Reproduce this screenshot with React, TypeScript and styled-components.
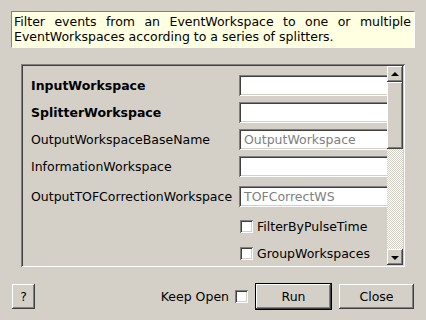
import React from "react";
import styled, { createGlobalStyle, css } from "styled-components";

const Global = createGlobalStyle`
  html, body { margin: 0; padding: 0; background: #d4d0c8; }
  body { font-family: "DejaVu Sans", sans-serif; font-size: 12.5px; color: #000; }
  * { box-sizing: border-box; }
`;

const raised = css`
  box-shadow: inset -1px -1px #404040, inset 1px 1px #ffffff,
    inset -2px -2px #808080, inset 2px 2px #d4d0c8;
`;
const sunken = css`
  box-shadow: inset 1px 1px #808080, inset -1px -1px #ffffff,
    inset 2px 2px #404040, inset -2px -2px #d4d0c8;
`;

const Dialog = styled.div`
  width: 426px;
  height: 320px;
  padding: 11px 11px 0 11px;
  display: flex;
  flex-direction: column;
  background: #d4d0c8;
`;

const Description = styled.div`
  height: 37px;
  border: 1px solid;
  border-color: #808080 #ffffff #ffffff #808080;
  background: #ffffe1;
  padding: 3px 3px 3px 2px;
  line-height: 14.5px;
  text-align: justify;
`;

const ScrollFrame = styled.div`
  margin: 16px 10px 0 10px;
  height: 203px;
  padding: 2px;
  display: flex;
  ${sunken};
`;

const Viewport = styled.div`
  flex: 1;
  overflow: hidden;
  padding: 9px 0 0 8px;
  display: flex;
  flex-direction: column;
`;

const Row = styled.div<{ $gap: number }>`
  display: grid;
  grid-template-columns: 208px 160px;
  align-items: center;
  height: 21px;
  margin-top: ${(p) => p.$gap}px;
`;

const Label = styled.span<{ $bold?: boolean }>`
  font-weight: ${(p) => (p.$bold ? "bold" : "normal")};
  white-space: nowrap;
`;

const Input = styled.div`
  height: 21px;
  background: #fff;
  padding: 0 5px;
  display: flex;
  align-items: center;
  color: #808080;
  white-space: nowrap;
  ${sunken};
`;

const CheckCell = styled.div`
  grid-column: 2;
  display: flex;
  align-items: center;
  gap: 4px;
  padding-left: 1px;
`;

const Box = styled.span`
  width: 13px;
  height: 13px;
  background: #fff;
  flex: none;
  ${sunken};
`;

const ScrollBar = styled.div`
  width: 16px;
  display: flex;
  flex-direction: column;
`;

const ScrollBtn = styled.div`
  height: 16px;
  background: #d4d0c8;
  display: flex;
  align-items: center;
  justify-content: center;
  ${raised};
`;

const Arrow = styled.span<{ $up?: boolean }>`
  width: 0;
  height: 0;
  border-left: 4px solid transparent;
  border-right: 4px solid transparent;
  ${(p) =>
    p.$up
      ? "border-bottom: 4px solid #000; margin-top: -1px;"
      : "border-top: 4px solid #000; margin-top: 1px;"}
`;

const Thumb = styled.div`
  height: 67px;
  background: #d4d0c8;
  ${raised};
`;

const Track = styled.div`
  flex: 1;
  background: repeating-conic-gradient(#ffffff 0 25%, #d4d0c8 0 50%) 0 0 / 2px 2px;
`;

const ButtonRow = styled.div`
  margin-top: 16px;
  padding: 0 1px;
  display: flex;
  align-items: center;
`;

const Button = styled.div<{ $w: number }>`
  width: ${(p) => p.$w}px;
  height: 25px;
  display: flex;
  align-items: center;
  justify-content: center;
  background: #d4d0c8;
  ${raised};
`;

const DefaultWrap = styled.div`
  border: 1px solid #000;
  margin-left: 7px;
`;

const KeepOpen = styled.div`
  margin-left: auto;
  display: flex;
  align-items: center;
  gap: 6px;
`;

const CloseWrap = styled.div`
  margin-left: 7px;
`;

export default function App() {
  return (
    <>
      <Global />
      <Dialog>
        <Description>
          Filter events from an EventWorkspace to one or multiple EventWorkspaces
          according to a series of splitters.
        </Description>
        <ScrollFrame>
          <Viewport>
            <Row $gap={0}>
              <Label $bold>InputWorkspace</Label>
              <Input />
            </Row>
            <Row $gap={6}>
              <Label $bold>SplitterWorkspace</Label>
              <Input />
            </Row>
            <Row $gap={6}>
              <Label>OutputWorkspaceBaseName</Label>
              <Input>OutputWorkspace</Input>
            </Row>
            <Row $gap={6}>
              <Label>InformationWorkspace</Label>
              <Input />
            </Row>
            <Row $gap={9}>
              <Label>OutputTOFCorrectionWorkspace</Label>
              <Input>TOFCorrectWS</Input>
            </Row>
            <Row $gap={9}>
              <CheckCell>
                <Box />
                <Label>FilterByPulseTime</Label>
              </CheckCell>
            </Row>
            <Row $gap={6}>
              <CheckCell>
                <Box />
                <Label>GroupWorkspaces</Label>
              </CheckCell>
            </Row>
          </Viewport>
          <ScrollBar>
            <ScrollBtn>
              <Arrow $up />
            </ScrollBtn>
            <Thumb />
            <Track />
            <ScrollBtn>
              <Arrow />
            </ScrollBtn>
          </ScrollBar>
        </ScrollFrame>
        <ButtonRow>
          <Button $w={23}>?</Button>
          <KeepOpen>
            <span>Keep Open</span>
            <Box />
          </KeepOpen>
          <DefaultWrap>
            <Button $w={75}>Run</Button>
          </DefaultWrap>
          <CloseWrap>
            <Button $w={75}>Close</Button>
          </CloseWrap>
        </ButtonRow>
      </Dialog>
    </>
  );
}
